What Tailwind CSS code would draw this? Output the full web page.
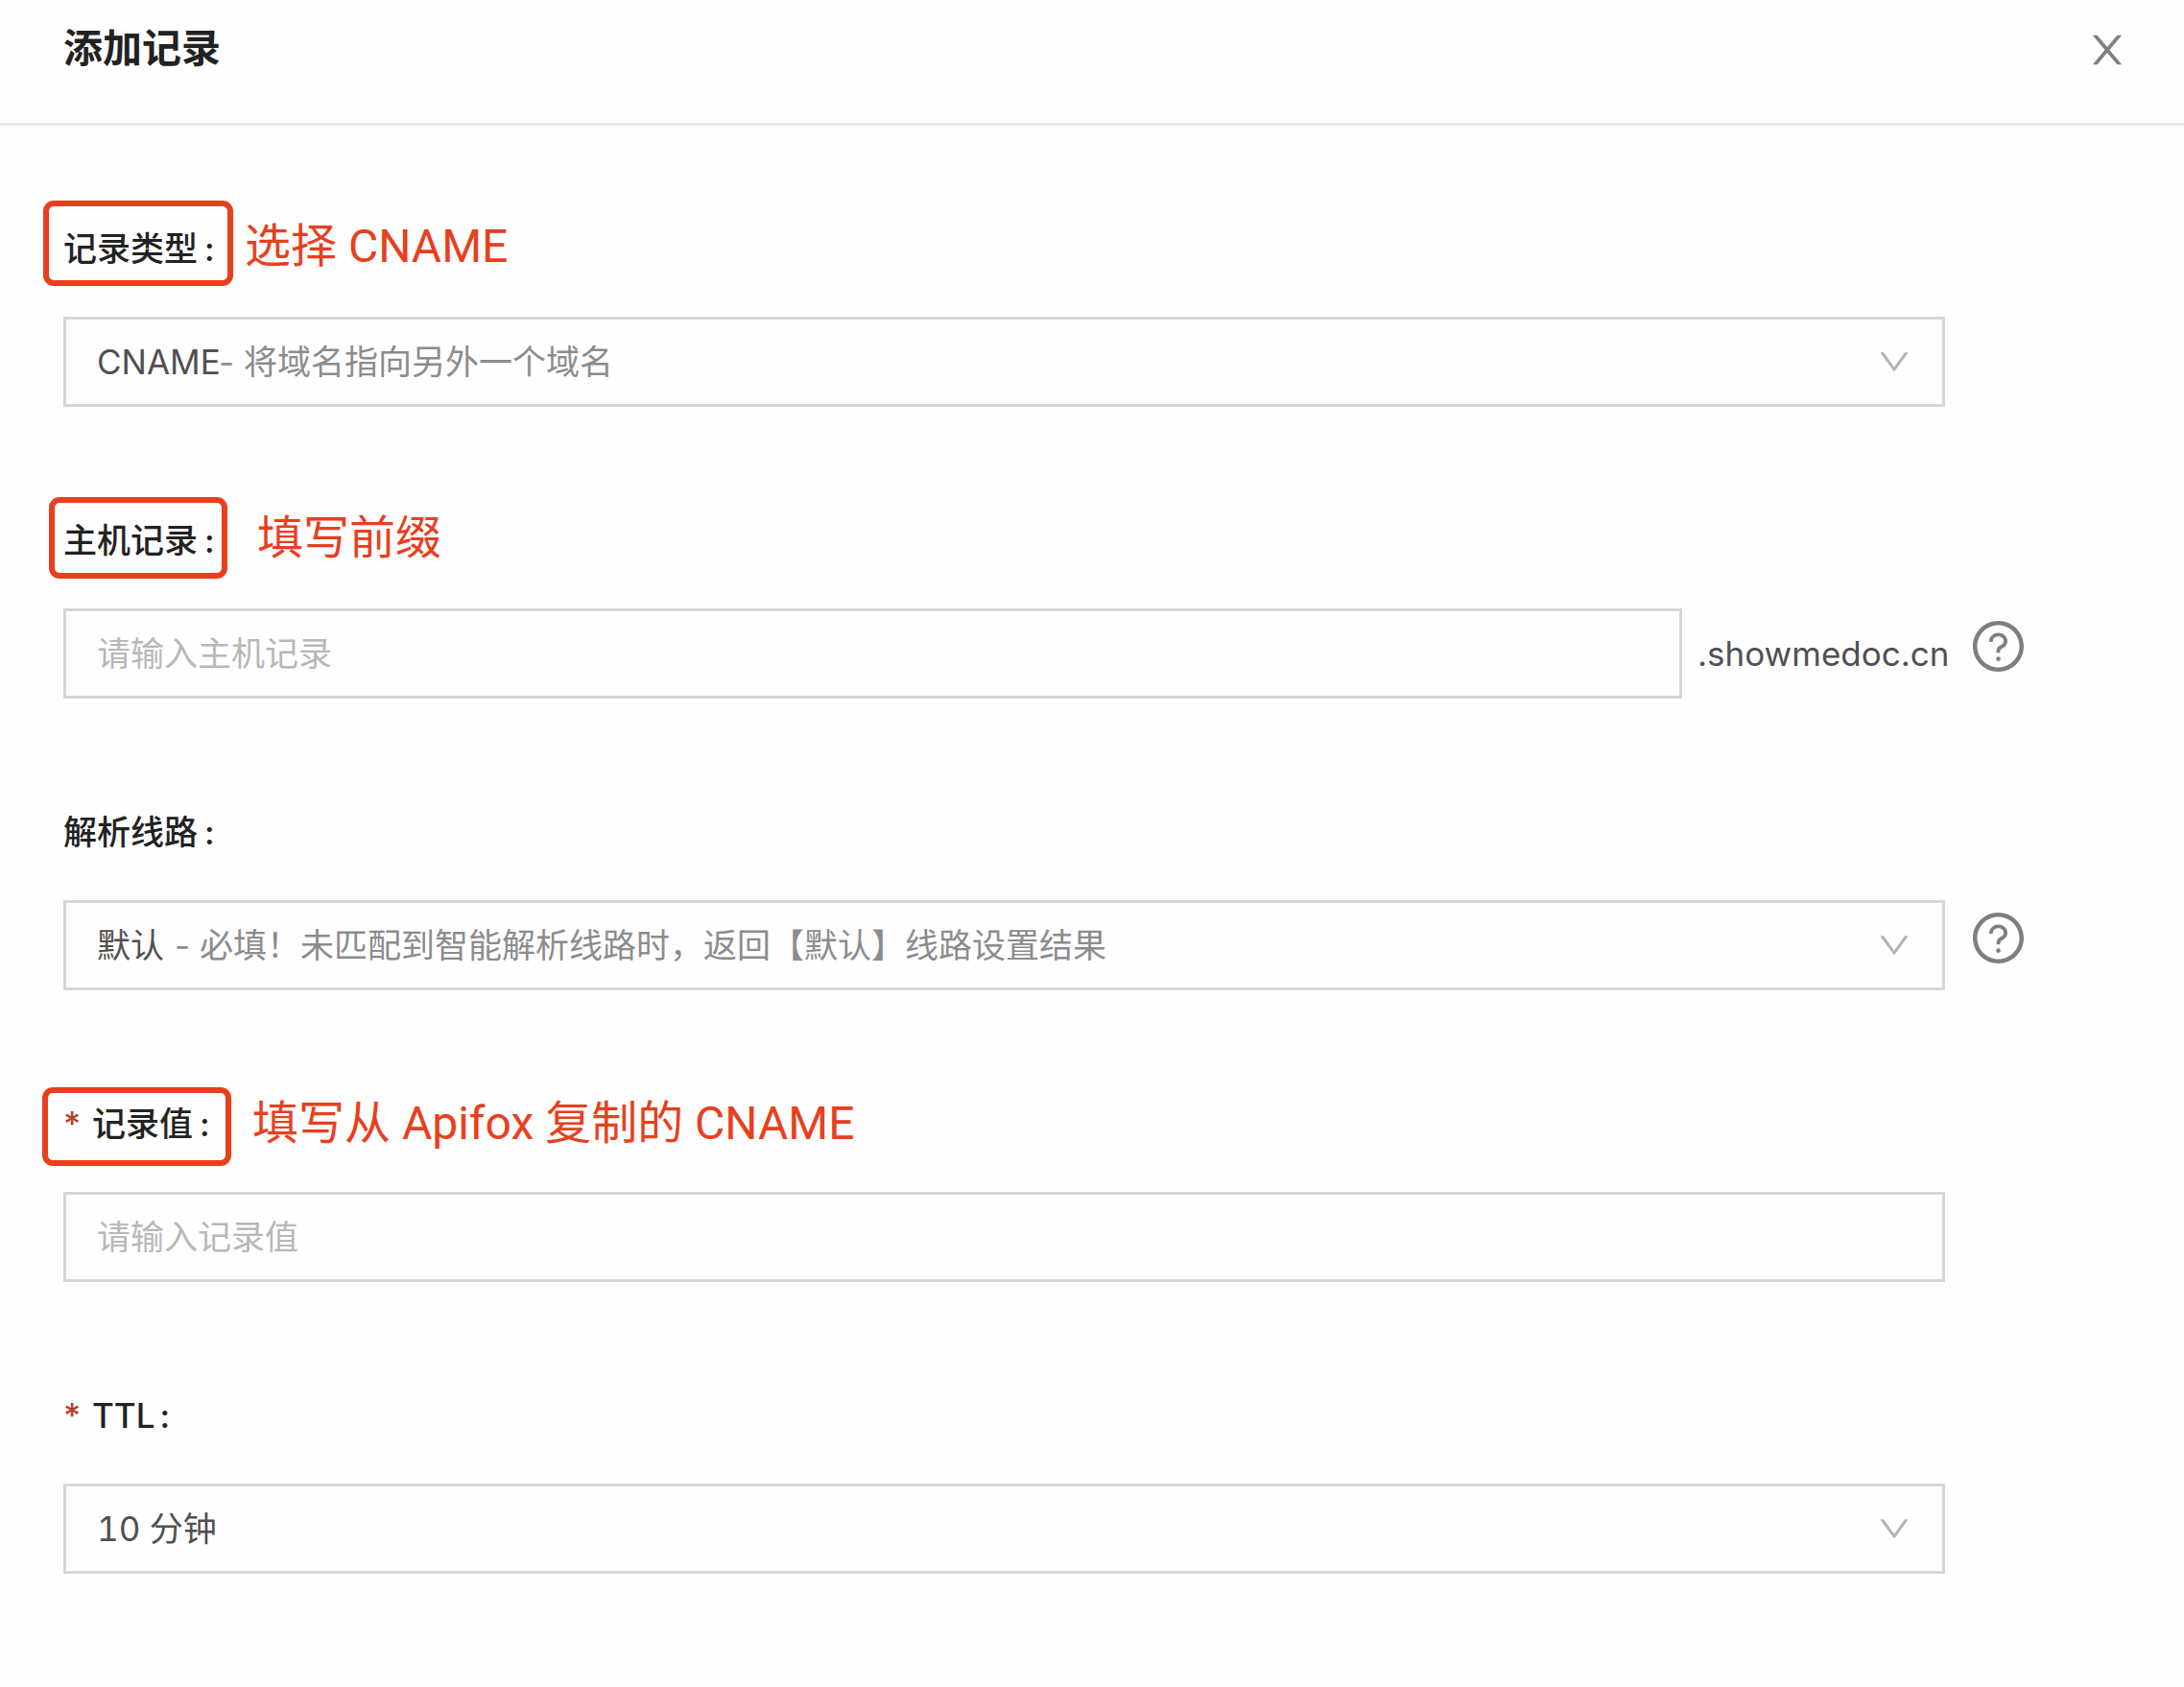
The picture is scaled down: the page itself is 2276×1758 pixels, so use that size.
<!DOCTYPE html>
<html lang="zh-CN">
<head>
<meta charset="utf-8">
<title>添加记录</title>
<script src="https://cdn.jsdelivr.net/npm/@tailwindcss/browser@4"></script>
</head>
<body class="min-h-screen bg-[#fefefe] font-[Inter,'Noto_Sans_CJK_SC',sans-serif] text-[35px] leading-[56px] text-[#222]">
<svg class="hidden" aria-hidden="true">
  <symbol id="down" viewBox="64 64 896 896"><path d="M884 256h-75c-5.1 0-9.9 2.5-12.9 6.6L512 654.2 227.9 262.6c-3-4.1-7.8-6.6-12.9-6.6h-75c-6.5 0-10.3 7.4-6.5 12.7l352.6 486.1c12.8 17.6 39 17.6 51.7 0l352.6-486.1c3.9-5.3.1-12.7-6.4-12.7z"/></symbol>
  <symbol id="help" viewBox="64 64 896 896"><path d="M512 64C264.6 64 64 264.6 64 512s200.6 448 448 448 448-200.6 448-448S759.4 64 512 64zm0 820c-205.4 0-372-166.6-372-372s166.6-372 372-372 372 166.6 372 372-166.6 372-372 372z"/><path d="M623.6 316.7C593.6 290.4 554 276 512 276s-81.6 14.5-111.6 40.7C369.2 344 352 380.7 352 420v7.6c0 4.4 3.6 8 8 8h48c4.4 0 8-3.6 8-8V420c0-44.1 43.1-80 96-80s96 35.9 96 80c0 31.1-22 59.6-56.1 72.7-21.2 8.1-39.2 22.3-52.1 40.9-13.1 19-19.9 41.8-19.9 64.9V620c0 4.4 3.6 8 8 8h48c4.4 0 8-3.6 8-8v-22.7a48.3 48.3 0 0 1 30.9-44.8c59-22.7 97.1-74.7 97.1-132.5.1-39.3-17.1-76-48.3-103.3zM472 732a40 40 0 1 0 80 0 40 40 0 1 0-80 0z"/></symbol>
</svg>

<header class="flex h-[131px] items-start justify-between border-b-3 border-[#e4e8ec] pr-[59px] pl-[66px] pt-5">
  <h1 class="text-[41px] leading-[60px] font-bold">添加记录</h1>
  <button type="button" aria-label="关闭" class="mt-[11px]">
    <svg class="size-[42px] fill-[#808080]" viewBox="64 64 896 896"><path d="M563.8 512l262.5-312.9c4.4-5.2.7-13.1-6.1-13.1h-79.8c-4.7 0-9.2 2.1-12.3 5.7L511.6 449.8 295.1 191.7c-3-3.6-7.5-5.7-12.3-5.7H203c-6.8 0-10.5 7.9-6.1 13.1L459.4 512 196.9 824.9A7.95 7.95 0 0 0 203 838h79.8c4.7 0 9.2-2.1 12.3-5.7l216.5-258.1 216.5 258.1c3 3.6 7.5 5.7 12.3 5.7h79.8c6.8 0 10.5-7.9 6.1-13.1L563.8 512z"/></svg>
  </button>
</header>

<form class="flex flex-col gap-[111px] pt-[100px] pr-[167px] pl-[66px]">

  <div class="flex flex-col gap-[43px]">
    <div class="relative flex">
      <label for="type" class="flex gap-[7px] font-medium">记录类型<span>:</span></label>
      <div class="absolute -top-[22px] -left-[21px] h-[89px] w-[198px] rounded-[11px] border-6 border-[#e83f1d]"></div>
      <p class="absolute -top-[2px] left-[189px] font-[Roboto,'Noto_Sans_CJK_SC',sans-serif] text-[48px] whitespace-nowrap text-[#e83f1d]">选择 CNAME</p>
    </div>
    <div class="relative mr-[82px]">
      <select id="type" class="block h-[94px] w-full appearance-none border-3 border-[#d6d6d6] bg-transparent pl-8 text-[#505050]"><option>CNAME</option></select>
      <span class="pointer-events-none absolute top-[19px] left-[162px] text-[#8c8c8c]">- 将域名指向另外一个域名</span>
      <svg class="pointer-events-none absolute top-[30px] right-[36px] size-[34px] fill-[#b4b4b4]"><use href="#down"/></svg>
    </div>
  </div>

  <div class="flex flex-col gap-[43px]">
    <div class="relative flex">
      <label for="host" class="flex gap-[7px] font-medium">主机记录<span>:</span></label>
      <div class="absolute -top-[17px] -left-[15px] h-[85px] w-[186px] rounded-[11px] border-6 border-[#e83f1d]"></div>
      <p class="absolute -top-[2px] left-[202px] font-[Roboto,'Noto_Sans_CJK_SC',sans-serif] text-[48px] whitespace-nowrap text-[#e83f1d]">填写前缀</p>
    </div>
    <div class="flex items-center">
      <input id="host" type="text" placeholder="请输入主机记录" class="h-[94px] min-w-0 flex-1 border-3 border-[#d6d6d6] bg-transparent pl-8 placeholder:text-[#b8b8b8]">
      <span class="ml-4 w-[258px] text-[#505050]">.showmedoc.cn</span>
      <button type="button" aria-label="主机记录帮助" class="mb-4 ml-[29px]"><svg class="size-[53px] fill-[#7e7e7e]"><use href="#help"/></svg></button>
    </div>
  </div>

  <div class="flex flex-col gap-[43px]">
    <label for="line" class="flex gap-[7px] font-medium">解析线路<span>:</span></label>
    <div class="flex items-center">
      <div class="relative flex-1">
        <select id="line" class="block h-[94px] w-full appearance-none border-3 border-[#d6d6d6] bg-transparent pl-8 text-[#505050]"><option>默认</option></select>
        <span class="pointer-events-none absolute top-[19px] left-[116px] text-[#8c8c8c]">- 必填！未匹配到智能解析线路时，返回【默认】线路设置结果</span>
        <svg class="pointer-events-none absolute top-[30px] right-[36px] size-[34px] fill-[#b4b4b4]"><use href="#down"/></svg>
      </div>
      <button type="button" aria-label="解析线路帮助" class="mb-4 ml-[29px]"><svg class="size-[53px] fill-[#7e7e7e]"><use href="#help"/></svg></button>
    </div>
  </div>

  <div class="flex flex-col gap-[43px]">
    <div class="relative flex">
      <label for="value" class="flex font-medium"><span class="w-[30px] text-[#b5402c]">*</span>记录值<span class="ml-[7px]">:</span></label>
      <div class="absolute -top-[10px] -left-[22px] h-[82px] w-[197px] rounded-[11px] border-6 border-[#e83f1d]"></div>
      <p class="absolute left-[197px] font-[Roboto,'Noto_Sans_CJK_SC',sans-serif] text-[48px] whitespace-nowrap text-[#e83f1d]">填写从 Apifox 复制的 CNAME</p>
    </div>
    <input id="value" type="text" placeholder="请输入记录值" class="mr-[82px] h-[94px] border-3 border-[#d6d6d6] bg-transparent pl-8 placeholder:text-[#b8b8b8]">
  </div>

  <div class="flex flex-col gap-[43px]">
    <label for="ttl" class="flex font-medium"><span class="w-[30px] text-[#b5402c]">*</span>TTL<span class="ml-[5px]">:</span></label>
    <div class="relative mr-[82px]">
      <select id="ttl" class="block h-[94px] w-full appearance-none border-3 border-[#d6d6d6] bg-transparent pl-8 text-[#505050] tabular-nums"><option>10 分钟</option></select>
      <svg class="pointer-events-none absolute top-[30px] right-[36px] size-[34px] fill-[#b4b4b4]"><use href="#down"/></svg>
    </div>
  </div>
</form>
</body>
</html>
